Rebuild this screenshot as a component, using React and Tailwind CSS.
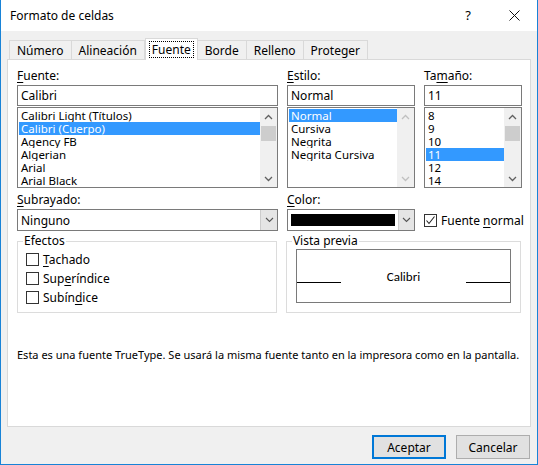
import React from 'react';

const font = { fontFamily: '"Segoe UI", "Noto Sans", "Liberation Sans", sans-serif' };

function U({ children }) {
  return <span className="underline underline-offset-2">{children}</span>;
}

function Scroll({ dim }) {
  const c = dim ? 'text-[#c0c0c0]' : 'text-[#606060]';
  return (
    <div className="w-[17px] flex flex-col bg-[#f0f0f0] shrink-0">
      <div className={`h-[17px] flex items-center justify-center ${c}`}>
        <svg width="9" height="6" viewBox="0 0 9 6"><path d="M1 5 L4.5 1.5 L8 5" fill="none" stroke="currentColor" strokeWidth="1.3" /></svg>
      </div>
      <div className="flex-1 flex flex-col">
        {!dim && <div className="h-[15px] bg-[#cdcdcd] mx-[1px] mt-[1px]" />}
      </div>
      <div className={`h-[17px] flex items-center justify-center ${c}`}>
        <svg width="9" height="6" viewBox="0 0 9 6"><path d="M1 1 L4.5 4.5 L8 1" fill="none" stroke="currentColor" strokeWidth="1.3" /></svg>
      </div>
    </div>
  );
}

function List({ items, sel, w, dim }) {
  return (
    <div className={`${w} h-[81px] border border-[#7a7a7a] bg-white flex mt-[1px]`}>
      <div className="flex-1 pt-[1px] pl-[1px] overflow-hidden text-[11.5px]">
        {items.map((t) => (
          <div key={t} className={`h-[13px] leading-[13px] pl-[2px] whitespace-nowrap overflow-hidden ${t === sel ? 'bg-[#3399ff] text-white' : ''}`}>{t}</div>
        ))}
      </div>
      <Scroll dim={dim} />
    </div>
  );
}

function Box({ w, children }) {
  return <div className={`${w} h-[21px] border border-[#7a7a7a] bg-white flex items-center px-[3px]`}>{children}</div>;
}

function Check({ checked, children }) {
  return (
    <div className="flex items-center gap-[4px] h-[19px] whitespace-nowrap">
      <div className="w-[13px] h-[13px] border border-[#333] bg-white flex items-center justify-center shrink-0">
        {checked && <svg width="11" height="11" viewBox="0 0 11 11"><path d="M1.5 5.5 L4 8.5 L9.5 1.5" fill="none" stroke="#222" strokeWidth="1.1" /></svg>}
      </div>
      <span>{children}</span>
    </div>
  );
}

function Combo({ w, children }) {
  return (
    <div className={`${w} h-[22px] border border-[#7a7a7a] bg-white flex`}>
      <div className="flex-1 flex items-center px-[3px]">{children}</div>
      <div className="w-[17px] bg-[#e5e5e5] border-l border-[#cccccc] flex items-center justify-center text-[#555]">
        <svg width="9" height="6" viewBox="0 0 9 6"><path d="M1 1 L4.5 4.5 L8 1" fill="none" stroke="currentColor" strokeWidth="1.1" /></svg>
      </div>
    </div>
  );
}

export default function App() {
  const tabs = ['Número', 'Alineación', 'Fuente', 'Borde', 'Relleno', 'Proteger'];
  return (
    <div style={font} className="w-[538px] h-[465px] bg-[#f0f0f0] border border-[#1883d7] border-t-0 flex flex-col text-[12px] leading-[15px] text-black">
      {/* Title bar */}
      <div className="h-[31px] bg-white flex items-center pl-[9px] shrink-0">
        <span className="flex-1 text-[12px]">Formato de celdas</span>
        <span className="w-[46px] text-center text-[13px]">?</span>
        <span className="w-[46px] flex justify-center">
          <svg width="11" height="11" viewBox="0 0 11 11"><path d="M0.5 0.5 L10.5 10.5 M10.5 0.5 L0.5 10.5" stroke="#111" strokeWidth="1" /></svg>
        </span>
      </div>

      {/* Tabs */}
      <div className="flex items-end pl-[8px] h-[28px] shrink-0">
        {tabs.map((t) =>
          t === 'Fuente' ? (
            <div key={t} className="h-[22px] px-[4px] bg-white border border-b-0 border-[#d9d9d9] -mb-[1px] relative z-10 flex items-center">
              <span className="outline-1 outline-dotted outline-black px-[2px] leading-[15px]">{t}</span>
            </div>
          ) : (
            <div key={t} className="h-[19px] px-[7px] bg-[#f0f0f0] border border-b-0 border-[#d9d9d9] -ml-[1px] first:ml-0 flex items-center">{t}</div>
          )
        )}
      </div>

      {/* Panel */}
      <div className="mx-[6px] h-[368px] bg-white border border-[#d9d9d9] px-[9px] pt-[8px] shrink-0">
        <div className="flex gap-[9px]">
          <div className="w-[261px]">
            <div className="h-[17px]"><U>F</U>uente:</div>
            <Box w="w-[261px]">Calibri</Box>
            <List w="w-[261px]" sel="Calibri (Cuerpo)" items={['Calibri Light (Títulos)', 'Calibri (Cuerpo)', 'Agency FB', 'Algerian', 'Arial', 'Arial Black']} />
          </div>
          <div className="w-[128px]">
            <div className="h-[17px]"><U>E</U>stilo:</div>
            <Box w="w-[128px]">Normal</Box>
            <List w="w-[128px]" dim sel="Normal" items={['Normal', 'Cursiva', 'Negrita', 'Negrita Cursiva']} />
          </div>
          <div className="w-[98px]">
            <div className="h-[17px]">Ta<U>m</U>año:</div>
            <Box w="w-[98px]">11</Box>
            <List w="w-[98px]" sel="11" items={['8', '9', '10', '11', '12', '14']} />
          </div>
        </div>

        <div className="flex gap-[9px] mt-[4px]">
          <div className="w-[261px]">
            <div className="h-[17px]"><U>S</U>ubrayado:</div>
            <Combo w="w-[261px]">Ninguno</Combo>
          </div>
          <div className="w-[128px]">
            <div className="h-[17px]"><U>C</U>olor:</div>
            <Combo w="w-[128px]"><div className="w-[104px] h-[12px] bg-black" /></Combo>
          </div>
          <div className="w-[98px] flex items-end pb-[1px]">
            <Check checked>Fuente <U>n</U>ormal</Check>
          </div>
        </div>

        <div className="flex gap-[9px] mt-[4px]">
          <div className="w-[261px] h-[72px] border border-[#dcdcdc] mt-[6px] relative pl-[8px] pt-[8px]">
            <span className="absolute -top-[9px] left-[5px] bg-white px-[1px]">Efectos</span>
            <Check><U>T</U>achado</Check>
            <Check>Sup<U>e</U>ríndice</Check>
            <Check>Subín<U>d</U>ice</Check>
          </div>
          <div className="w-[236px] h-[72px] border border-[#dcdcdc] mt-[6px] relative px-[9px] pt-[7px]">
            <span className="absolute -top-[9px] left-[5px] bg-white px-[1px]">Vista previa</span>
            <div className="h-[54px] border border-[#7a7a7a] bg-white flex items-center">
              <div className="w-[44px] h-px bg-black mt-[13px]" />
              <div className="flex-1 text-center text-[13px]" style={{ fontFamily: 'Carlito, "Noto Sans", "Liberation Sans", sans-serif' }}>Calibri</div>
              <div className="w-[44px] h-px bg-black mt-[13px]" />
            </div>
          </div>
        </div>

        <div className="mt-[34px] text-[11px] whitespace-nowrap">Esta es una fuente TrueType. Se usará la misma fuente tanto en la impresora como en la pantalla.</div>
      </div>

      {/* Buttons */}
      <div className="flex justify-end gap-[10px] pr-[7px] mt-[8px]">
        <button className="w-[74px] h-[24px] bg-[#e1e1e1] border-2 border-[#0078d7]">Aceptar</button>
        <button className="w-[74px] h-[24px] bg-[#e1e1e1] border border-[#adadad]">Cancelar</button>
      </div>
    </div>
  );
}
